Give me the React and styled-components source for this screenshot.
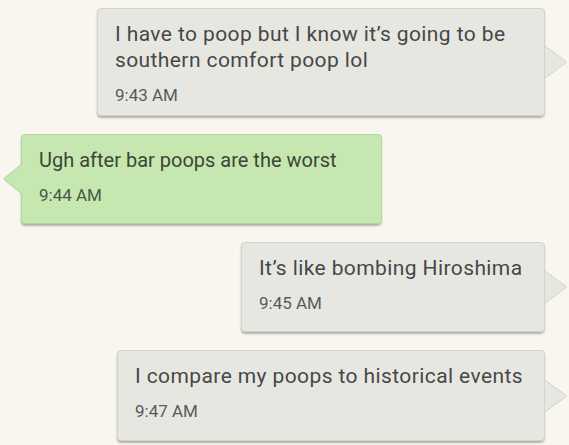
import React from "react";
import styled, { createGlobalStyle } from "styled-components";

const Global = createGlobalStyle`
  html, body { margin: 0; padding: 0; background: #f8f6ef; }
  body { font-family: Roboto, "Noto Sans", "Liberation Sans", sans-serif; }
`;

const Thread = styled.div`
  width: 569px;
  height: 445px;
  box-sizing: border-box;
  padding: 8px 24px 0 21px;
  display: flex;
  flex-direction: column;
  gap: 18px;
  overflow: hidden;
  background: #f8f6ef;
`;

const Row = styled.div`
  display: flex;
  justify-content: ${(p) => (p.$out ? "flex-start" : "flex-end")};
`;

const Bubble = styled.div`
  position: relative;
  box-sizing: border-box;
  width: ${(p) => p.$w}px;
  padding: 12px 17px ${(p) => p.$pb}px;
  border-radius: 4px;
  background: ${(p) => (p.$out ? "#c6e8b0" : "#e7e7e2")};
  border: 1px solid ${(p) => (p.$out ? "#b3d69c" : "#d3d3ce")};
  box-shadow: 0 2px 2px rgba(0, 0, 0, 0.16), -1px 3px 3px -2px rgba(0, 0, 0, 0.24);
`;

const Body = styled.div`
  font-size: ${(p) => (p.$out ? "20px" : "21px")};
  letter-spacing: ${(p) => (p.$out ? "0" : "0.4px")};
  line-height: 26px;
  color: ${(p) => (p.$out ? "#3c4637" : "#474747")};
`;

const Time = styled.div`
  margin-top: 12px;
  font-size: 17px;
  line-height: 20px;
  color: ${(p) => (p.$out ? "#4a5646" : "#5a5a5a")};
`;

const TailSvg = styled.svg`
  position: absolute;
  top: 50%;
  transform: translateY(-50%);
  ${(p) => (p.$out ? "left: -19px;" : "right: -23px;")}
  overflow: visible;
`;

function Tail({ out }) {
  const fill = out ? "#c6e8b0" : "#e7e7e2";
  const stroke = out ? "#b3d69c" : "#d3d3ce";
  if (out) {
    return (
      <TailSvg $out width="20" height="32" viewBox="0 0 20 32">
        <path d="M20 0 L1.5 15 Q0 16 1.5 17 L20 32 Z" fill={fill} />
        <path d="M20 0 L1.5 15 Q0 16 1.5 17 L20 32" fill="none" stroke={stroke} strokeWidth="1" />
      </TailSvg>
    );
  }
  return (
    <TailSvg width="22" height="32" viewBox="0 0 22 32">
      <path d="M0 0 L20.5 15 Q22 16 20.5 17 L0 32 Z" fill={fill} />
      <path d="M0 0 L20.5 15 Q22 16 20.5 17 L0 32" fill="none" stroke={stroke} strokeWidth="1" />
    </TailSvg>
  );
}

const messages = [
  { text: "I have to poop but I know it\u2019s going to be southern comfort poop lol", time: "9:43 AM", w: 448, pb: 10 },
  { text: "Ugh after bar poops are the worst", time: "9:44 AM", w: 361, pb: 18, out: true },
  { text: "It\u2019s like bombing Hiroshima", time: "9:45 AM", w: 304, pb: 18 },
  { text: "I compare my poops to historical events", time: "9:47 AM", w: 428, pb: 19 },
];

export default function App() {
  return (
    <>
      <Global />
      <Thread>
        {messages.map((m, i) => (
          <Row key={i} $out={m.out}>
            <Bubble $out={m.out} $w={m.w} $pb={m.pb}>
              <Body $out={m.out}>{m.text}</Body>
              <Time $out={m.out}>{m.time}</Time>
              <Tail out={m.out} />
            </Bubble>
          </Row>
        ))}
      </Thread>
    </>
  );
}
